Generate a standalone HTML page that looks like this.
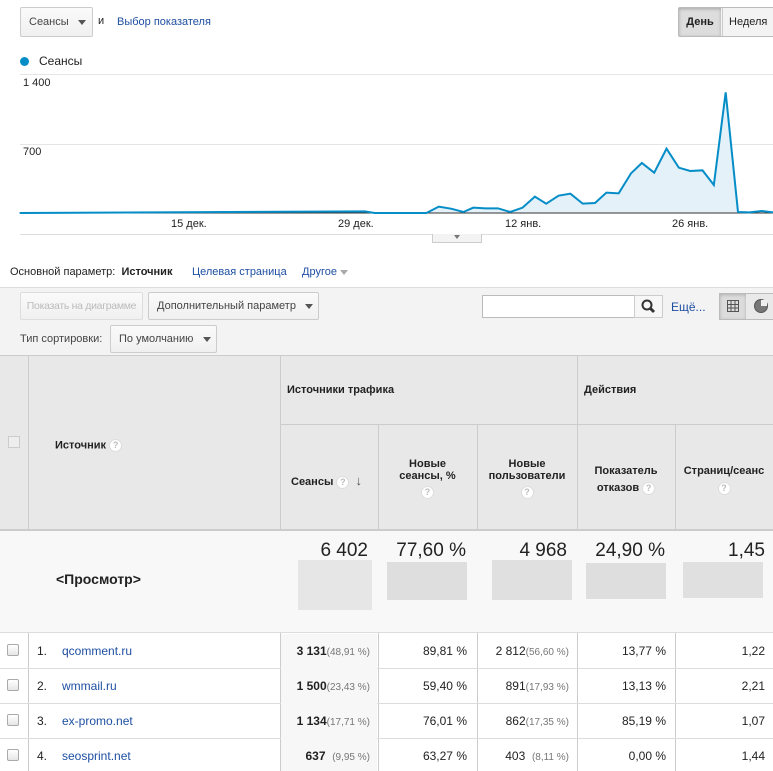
<!DOCTYPE html>
<html><head><meta charset="utf-8"><style>
*{box-sizing:border-box;margin:0;padding:0;white-space:nowrap}
body{width:773px;height:771px;overflow:hidden;background:#fff;font-family:"Liberation Sans",Arial,sans-serif;font-size:11px;color:#222;position:relative}
.a{position:absolute}
.btn{position:absolute;border:1px solid #ccc;border-radius:2px;background:linear-gradient(#fafafa,#f0f0f0);color:#444;font-size:11px;line-height:28px;padding-left:8px}
.tri{display:inline-block;width:0;height:0;border-left:4px solid transparent;border-right:4px solid transparent;border-top:5px solid #555;vertical-align:middle}
a,.lk{color:#1e4fa1;text-decoration:none}
.q{display:inline-block;width:13px;height:13px;border-radius:50%;border:1px solid #ddd;background:#fff;color:#bbb;font-size:9px;line-height:11px;text-align:center;vertical-align:middle}
.hd{background:#e8e8e8}
.num{position:absolute;text-align:right;font-size:12px}
.pct{color:#777;font-size:10px}
.cb{position:absolute;left:7px;width:12px;height:12px;border:1px solid #aaa;border-radius:2px;background:linear-gradient(#fff,#e6e6e6)}
</style></head><body>
<div class="btn" style="left:20px;top:7px;width:73px;height:30px">Сеансы &nbsp;&nbsp;<span class="tri"></span></div>
<div class="a" style="left:98px;top:15px;font-size:11px">и</div>
<div class="a lk" style="left:117px;top:16px;font-size:11px">Выбор показателя</div>
<div class="a" style="left:678px;top:7px;width:100px;height:30px;border:1px solid #bbb;border-radius:2px;background:#f3f3f3"></div>
<div class="a" style="left:679px;top:8px;width:42px;height:28px;background:#ddd;box-shadow:inset 0 1px 3px rgba(0,0,0,.25);font-weight:bold;line-height:28px;text-align:center">День</div>
<div class="a" style="left:722px;top:8px;height:28px;border-left:1px solid #ccc;line-height:28px;padding-left:6px">Неделя</div>
<div class="a" style="left:20px;top:57px;width:9px;height:9px;border-radius:50%;background:#058dc7"></div>
<div class="a" style="left:39px;top:54px;font-size:12px">Сеансы</div>
<div class="a" style="left:20px;top:74px;width:753px;border-top:1px solid #e5e5e5"></div>
<div class="a" style="left:20px;top:144px;width:753px;border-top:1px solid #e5e5e5"></div>
<div class="a" style="left:23px;top:77px;font-size:11px">1 400</div>
<div class="a" style="left:23px;top:146px;font-size:11px">700</div>
<svg class="a" style="left:0;top:0" width="773" height="360" viewBox="0 0 1568 1080" preserveAspectRatio="none">
<polygon fill="#e4f1f9" points="40,639 740,634 760,639 865,639 890,620 915,626 940,636 960,623 985,625 1010,625 1035,636 1060,623 1085,590 1108,611 1133,587 1157,581 1182,611 1207,609 1230,578 1255,580 1280,520 1302,489 1327,518 1352,446 1377,503 1400,513 1425,511 1448,555 1472,277 1497,636 1520,637 1545,633 1568,637 1568,639"/>
<line x1="40" y1="639" x2="1568" y2="639" stroke="#333" stroke-width="1" vector-effect="non-scaling-stroke"/>
<polyline fill="none" stroke="#058dc7" stroke-width="2" vector-effect="non-scaling-stroke" points="40,639 740,634 760,639 865,639 890,620 915,626 940,636 960,623 985,625 1010,625 1035,636 1060,623 1085,590 1108,611 1133,587 1157,581 1182,611 1207,609 1230,578 1255,580 1280,520 1302,489 1327,518 1352,446 1377,503 1400,513 1425,511 1448,555 1472,277 1497,636 1520,637 1545,633 1568,637"/>
</svg>
<div class="a" style="left:171px;top:218px">15 дек.</div>
<div class="a" style="left:338px;top:218px">29 дек.</div>
<div class="a" style="left:505px;top:218px">12 янв.</div>
<div class="a" style="left:672px;top:218px">26 янв.</div>
<div class="a" style="left:20px;top:234px;width:753px;border-top:1px solid #ddd"></div>
<div class="a" style="left:432px;top:234px;width:50px;height:9px;border:1px solid #ccc;border-top:none;background:#f3f3f3;text-align:center;line-height:6px"><span class="tri" style="border-top-color:#777;border-width:4px 3px 0"></span></div>
<div class="a" style="left:10px;top:266px">Основной параметр: &nbsp;<b style="color:#222">Источник</b></div>
<div class="a lk" style="left:192px;top:266px">Целевая страница</div>
<div class="a lk" style="left:302px;top:266px">Другое <span class="tri" style="border-top-color:#aaa"></span></div>
<div class="a" style="left:0;top:287px;width:773px;height:68px;background:#f3f3f3;border-top:1px solid #ddd"></div>
<div class="btn" style="left:20px;top:292px;width:123px;height:28px;color:#bbb;padding-left:0;text-align:center;line-height:26px;border-color:#ddd;font-size:10.5px;letter-spacing:-0.3px;overflow:hidden">Показать на диаграмме</div>
<div class="btn" style="left:148px;top:292px;width:171px;height:28px;line-height:26px">Дополнительный параметр &nbsp;&nbsp;<span class="tri"></span></div>
<div class="a" style="left:482px;top:295px;width:153px;height:23px;border:1px solid #bbb;background:#fff"></div>
<div class="a" style="left:634px;top:295px;width:29px;height:23px;border:1px solid #ccc;background:#f7f7f7">
<svg width="27" height="21"><circle cx="12" cy="9" r="4.5" fill="none" stroke="#333" stroke-width="2"/><line x1="15" y1="12" x2="19" y2="16" stroke="#333" stroke-width="3"/></svg></div>
<div class="a lk" style="left:671px;top:300px;font-size:12px">Ещё...</div>
<div class="a" style="left:719px;top:293px;width:56px;height:27px;border:1px solid #bbb;background:#e9e9e9"></div>
<div class="a" style="left:720px;top:294px;width:26px;height:25px;background:#dcdcdc;box-shadow:inset 0 1px 3px rgba(0,0,0,.2)"><svg width="26" height="25"><g fill="none" stroke="#555"><rect x="7.5" y="6.5" width="11" height="11"/><line x1="7" y1="10.5" x2="19" y2="10.5"/><line x1="7" y1="14" x2="19" y2="14"/><line x1="11" y1="6" x2="11" y2="18"/><line x1="15" y1="6" x2="15" y2="18"/></g></svg></div>
<div class="a" style="left:754px;top:299px;width:14px;height:14px;border-radius:50%;background:#777;border:1px solid #555"></div>
<div class="a" style="left:761px;top:300px;width:6px;height:6px;background:#eee"></div>
<div class="a" style="left:20px;top:333px;color:#444">Тип сортировки:</div>
<div class="btn" style="left:110px;top:325px;width:107px;height:28px;line-height:26px">По умолчанию &nbsp;&nbsp;<span class="tri"></span></div>
<div class="a hd" style="left:0;top:355px;width:773px;height:176px;border-top:1px solid #ccc;border-bottom:2px solid #ccc"></div>
<div class="a" style="left:28px;top:355px;height:416px;border-left:1px solid #ccc"></div>
<div class="a" style="left:280px;top:355px;height:416px;border-left:1px solid #ccc"></div>
<div class="a" style="left:577px;top:355px;height:416px;border-left:1px solid #ccc"></div>
<div class="a" style="left:378px;top:424px;height:347px;border-left:1px solid #ccc"></div>
<div class="a" style="left:477px;top:424px;height:347px;border-left:1px solid #ccc"></div>
<div class="a" style="left:675px;top:424px;height:347px;border-left:1px solid #ccc"></div>
<div class="a" style="left:280px;top:424px;width:493px;border-top:1px solid #ccc"></div>
<div class="a" style="left:8px;top:436px;width:12px;height:12px;border:1px solid #ccc;background:#eee"></div>
<div class="a" style="left:55px;top:439px;font-weight:bold">Источник <span class="q">?</span></div>
<div class="a" style="left:287px;top:384px;font-weight:bold">Источники трафика</div>
<div class="a" style="left:584px;top:384px;font-weight:bold">Действия</div>
<div class="a" style="left:291px;top:473px;font-weight:bold">Сеансы <span class="q">?</span> &nbsp;<span style="font-size:13px;color:#555">↓</span></div>
<div class="a" style="left:378px;top:458px;width:99px;text-align:center;font-weight:bold;line-height:12px;white-space:normal">Новые<br>сеансы, %<br><span class="q" style="margin-top:4px">?</span></div>
<div class="a" style="left:477px;top:458px;width:100px;text-align:center;font-weight:bold;line-height:12px;white-space:normal">Новые<br>пользователи<br><span class="q" style="margin-top:4px">?</span></div>
<div class="a" style="left:577px;top:463px;width:98px;text-align:center;font-weight:bold;line-height:17px">Показатель<br>отказов <span class="q">?</span></div>
<div class="a" style="left:675px;top:463px;width:98px;text-align:center;font-weight:bold;line-height:17px">Страниц/сеанс<br><span class="q">?</span></div>
<div class="a" style="left:0;top:531px;width:773px;height:102px;background:#f8f8f8;border-bottom:1px solid #ddd"></div>
<div class="a" style="left:56px;top:571px;font-size:14px;font-weight:bold">&lt;Просмотр&gt;</div>
<div class="num" style="left:280px;width:88px;top:540px;font-size:19px">6 402</div>
<div class="num" style="left:378px;width:88px;top:540px;font-size:19px">77,60 %</div>
<div class="num" style="left:477px;width:90px;top:540px;font-size:19px">4 968</div>
<div class="num" style="left:577px;width:88px;top:540px;font-size:19px">24,90 %</div>
<div class="num" style="left:675px;width:90px;top:540px;font-size:19px">1,45</div>
<div class="a" style="left:298px;top:560px;width:74px;height:50px;background:#e6e6e6"></div>
<div class="a" style="left:387px;top:562px;width:80px;height:38px;background:#dedede"></div>
<div class="a" style="left:492px;top:560px;width:80px;height:40px;background:#e0e0e0"></div>
<div class="a" style="left:586px;top:563px;width:80px;height:36px;background:#dedede"></div>
<div class="a" style="left:683px;top:562px;width:80px;height:36px;background:#e0e0e0"></div>
<div class="a" style="left:0;top:668px;width:773px;border-top:1px solid #ddd"></div>
<div class="a" style="left:0;top:703px;width:773px;border-top:1px solid #ddd"></div>
<div class="a" style="left:0;top:738px;width:773px;border-top:1px solid #ddd"></div>
<div class="a" style="left:281px;top:634px;width:96px;height:137px;background:#f7f7f7"></div>

<div class="cb" style="top:644px"></div><div class="a" style="left:37px;top:644px;font-size:12px">1.</div><div class="a lk" style="left:62px;top:644px;font-size:12px">qcomment.ru</div>
<div class="num" style="left:280px;width:90px;top:644px"><b>3 131</b><span class="pct">(48,91 %)</span></div>
<div class="num" style="left:378px;width:89px;top:644px">89,81 %</div>
<div class="num" style="left:477px;width:92px;top:644px">2 812<span class="pct">(56,60 %)</span></div>
<div class="num" style="left:577px;width:89px;top:644px">13,77 %</div>
<div class="num" style="left:675px;width:90px;top:644px">1,22</div>

<div class="cb" style="top:679px"></div><div class="a" style="left:37px;top:679px;font-size:12px">2.</div><div class="a lk" style="left:62px;top:679px;font-size:12px">wmmail.ru</div>
<div class="num" style="left:280px;width:90px;top:679px"><b>1 500</b><span class="pct">(23,43 %)</span></div>
<div class="num" style="left:378px;width:89px;top:679px">59,40 %</div>
<div class="num" style="left:477px;width:92px;top:679px">891<span class="pct">(17,93 %)</span></div>
<div class="num" style="left:577px;width:89px;top:679px">13,13 %</div>
<div class="num" style="left:675px;width:90px;top:679px">2,21</div>

<div class="cb" style="top:714px"></div><div class="a" style="left:37px;top:714px;font-size:12px">3.</div><div class="a lk" style="left:62px;top:714px;font-size:12px">ex-promo.net</div>
<div class="num" style="left:280px;width:90px;top:714px"><b>1 134</b><span class="pct">(17,71 %)</span></div>
<div class="num" style="left:378px;width:89px;top:714px">76,01 %</div>
<div class="num" style="left:477px;width:92px;top:714px">862<span class="pct">(17,35 %)</span></div>
<div class="num" style="left:577px;width:89px;top:714px">85,19 %</div>
<div class="num" style="left:675px;width:90px;top:714px">1,07</div>

<div class="cb" style="top:749px"></div><div class="a" style="left:37px;top:749px;font-size:12px">4.</div><div class="a lk" style="left:62px;top:749px;font-size:12px">seosprint.net</div>
<div class="num" style="left:280px;width:90px;top:749px"><b>637</b> &nbsp;<span class="pct">(9,95 %)</span></div>
<div class="num" style="left:378px;width:89px;top:749px">63,27 %</div>
<div class="num" style="left:477px;width:92px;top:749px">403 &nbsp;<span class="pct">(8,11 %)</span></div>
<div class="num" style="left:577px;width:89px;top:749px">0,00 %</div>
<div class="num" style="left:675px;width:90px;top:749px">1,44</div>
</body></html>
